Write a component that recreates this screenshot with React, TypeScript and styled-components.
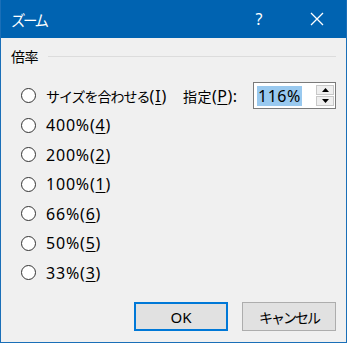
import React, { useState } from "react";
import styled, { createGlobalStyle } from "styled-components";

const GlobalStyle = createGlobalStyle`
  html, body {
    margin: 0;
    padding: 0;
    background: #ffffff;
  }
  * {
    box-sizing: border-box;
  }
`;

const LATIN_FONT = `"Noto Sans", "Noto Sans CJK JP", sans-serif`;
const JP_FONT = `"Noto Sans CJK JP", "Noto Sans", sans-serif`;

const Window = styled.div`
  width: 347px;
  height: 343px;
  background: #f0f0f0;
  border: 1px solid #1a6fb8;
  border-top: none;
  display: flex;
  flex-direction: column;
  font-family: ${LATIN_FONT};
  font-size: 16px;
  color: #000;
  overflow: hidden;
`;

const TitleBar = styled.div`
  height: 38px;
  flex: none;
  background: #0063b1;
  color: #ffffff;
  display: flex;
  align-items: center;
  padding: 0 7px 0 11px;
  margin: 0 -1px;
`;

const Title = styled.div`
  flex: 1;
  font-family: ${JP_FONT};
  font-size: 14.5px;
  letter-spacing: -2.5px;
`;

const TitleButtons = styled.div`
  display: flex;
  gap: 12px;
`;

const TitleButton = styled.div`
  width: 46px;
  height: 38px;
  display: flex;
  align-items: center;
  justify-content: center;
  font-family: "Noto Sans", sans-serif;
  font-size: 16px;
`;

const Body = styled.div`
  flex: 1;
  display: flex;
  flex-direction: column;
  padding: 8px 10px 0 10px;
`;

const GroupHeader = styled.div`
  display: flex;
  align-items: center;
  gap: 10px;
  height: 20px;
`;

const GroupLine = styled.div`
  flex: 1;
  height: 1px;
  background: #dcdcdc;
`;

const Jp = styled.span<{ $tracking?: number; $size?: number }>`
  font-family: ${JP_FONT};
  font-size: ${(p) => p.$size ?? 14}px;
  letter-spacing: ${(p) => p.$tracking ?? 0}px;
`;

const GroupContent = styled.div`
  display: flex;
  padding-top: 15px;
  padding-left: 10px;
`;

const RadioList = styled.div`
  display: flex;
  flex-direction: column;
  width: 163px;
`;

const RadioRow = styled.label`
  display: flex;
  align-items: center;
  height: 29.5px;
  gap: 10px;
  letter-spacing: 0.8px;
  cursor: default;
`;

const RadioCircle = styled.span<{ $checked?: boolean }>`
  width: 15px;
  height: 15px;
  border-radius: 50%;
  border: 1px solid #333333;
  background: #ffffff;
  display: flex;
  align-items: center;
  justify-content: center;
  flex: none;
  &::after {
    content: "";
    width: 7px;
    height: 7px;
    border-radius: 50%;
    background: ${(p) => (p.$checked ? "#333" : "transparent")};
  }
`;

const Mnemonic = styled.span`
  text-decoration: underline;
  text-underline-offset: 2px;
`;

const SpecRow = styled.div`
  display: flex;
  align-items: center;
  height: 29.5px;
`;

const SpecLabel = styled.span`
  width: 70px;
  letter-spacing: 0.5px;
`;

const SpinBox = styled.div`
  width: 83px;
  height: 27px;
  border: 1px solid #7a7a7a;
  background: #ffffff;
  display: flex;
  align-items: center;
  padding: 2px 1px 2px 3px;
`;

const SpinValue = styled.div`
  flex: 1;
  display: flex;
  align-items: center;
  letter-spacing: 0.5px;
  span {
    background: #99c9ef;
    padding: 0 1px 0 1px;
    line-height: 20px;
  }
`;

const SpinButtons = styled.div`
  display: flex;
  flex-direction: column;
  width: 18px;
  height: 100%;
  gap: 1px;
`;

const SpinButton = styled.div`
  flex: 1;
  border: 1px solid #c8c8c8;
  background: #efefef;
  display: flex;
  align-items: center;
  justify-content: center;
`;

const Footer = styled.div`
  margin-top: auto;
  display: flex;
  justify-content: flex-end;
  gap: 14px;
  padding: 0 0 11px 0;
`;

const Button = styled.button<{ $default?: boolean }>`
  width: 94px;
  height: 29px;
  font-family: ${LATIN_FONT};
  font-size: 15px;
  color: #000;
  background: #e1e1e1;
  border: ${(p) => (p.$default ? "2px solid #0078d7" : "1px solid #adadad")};
  padding: 0;
  cursor: default;
`;

const Arrow = ({ up }: { up?: boolean }) => (
  <svg width="7" height="4" viewBox="0 0 7 4">
    <polygon points={up ? "0,4 7,4 3.5,0" : "0,0 7,0 3.5,4"} fill="#000" />
  </svg>
);

const options: { text: string; key: string; jp?: boolean }[] = [
  { text: "サイズを合わせる", key: "I", jp: true },
  { text: "400%", key: "4" },
  { text: "200%", key: "2" },
  { text: "100%", key: "1" },
  { text: "66%", key: "6" },
  { text: "50%", key: "5" },
  { text: "33%", key: "3" },
];

export default function App() {
  const [selected] = useState<number | null>(null);
  return (
    <>
      <GlobalStyle />
      <Window>
        <TitleBar>
          <Title>ズーム</Title>
          <TitleButtons>
            <TitleButton>?</TitleButton>
            <TitleButton>
              <svg width="14" height="14" viewBox="0 0 14 14">
                <path d="M1 1 L13 13 M13 1 L1 13" stroke="#fff" strokeWidth="1.3" />
              </svg>
            </TitleButton>
          </TitleButtons>
        </TitleBar>
        <Body>
          <GroupHeader>
            <Jp $tracking={-0.5}>倍率</Jp>
            <GroupLine />
          </GroupHeader>
          <GroupContent>
            <RadioList>
              {options.map((o, i) => (
                <RadioRow key={o.key}>
                  <RadioCircle $checked={selected === i} />
                  <span>
                    {o.jp ? <Jp $tracking={-1}>{o.text}</Jp> : o.text}(
                    <Mnemonic>{o.key}</Mnemonic>)
                  </span>
                </RadioRow>
              ))}
            </RadioList>
            <div>
              <SpecRow>
                <SpecLabel>
                  <Jp $tracking={0.5}>指定</Jp>(<Mnemonic>P</Mnemonic>):
                </SpecLabel>
                <SpinBox>
                  <SpinValue>
                    <span>116%</span>
                  </SpinValue>
                  <SpinButtons>
                    <SpinButton>
                      <Arrow up />
                    </SpinButton>
                    <SpinButton>
                      <Arrow />
                    </SpinButton>
                  </SpinButtons>
                </SpinBox>
              </SpecRow>
            </div>
          </GroupContent>
          <Footer>
            <Button $default>OK</Button>
            <Button>
              <Jp $tracking={-2}>キャンセル</Jp>
            </Button>
          </Footer>
        </Body>
      </Window>
    </>
  );
}
